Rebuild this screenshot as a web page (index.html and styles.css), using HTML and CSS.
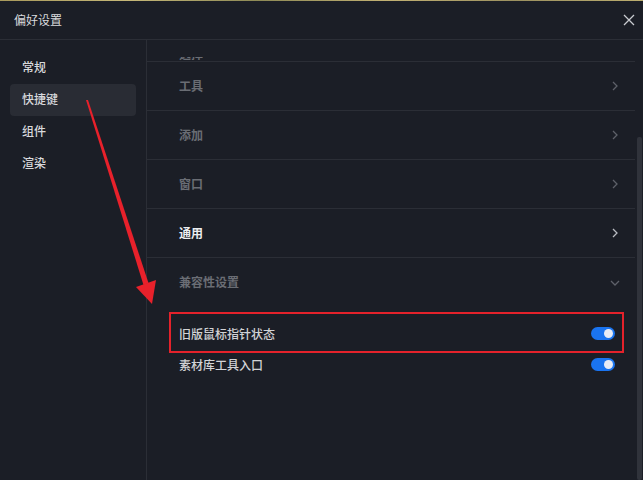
FILE: index.html
```html
<!DOCTYPE html>
<html lang="zh-CN">
<head>
<meta charset="utf-8">
<title>偏好设置</title>
<link rel="stylesheet" href="styles.css">
</head>
<body>
<div class="strip"></div>
<div class="dialog">
  <header class="header">
    <span class="title">偏好设置</span>
    <svg class="close" width="12" height="12" viewBox="0 0 12 12"><path d="M1 1L11 11M11 1L1 11" stroke="#c9cbd0" stroke-width="1.3" fill="none"/></svg>
  </header>
  <div class="main">
    <nav class="sidebar">
      <div class="nav-item">常规</div>
      <div class="nav-item active">快捷键</div>
      <div class="nav-item">组件</div>
      <div class="nav-item">渲染</div>
    </nav>
    <section class="panel">
      <div class="content">
        <div class="row partial"><span class="clip-box"><span class="clip-text">选择</span></span></div>
        <div class="row"><span class="label">工具</span><svg class="chev" width="6" height="10" viewBox="0 0 6 10"><path d="M1 1L5 5L1 9" stroke="#5e6169" stroke-width="1.3" fill="none"/></svg></div>
        <div class="row"><span class="label">添加</span><svg class="chev" width="6" height="10" viewBox="0 0 6 10"><path d="M1 1L5 5L1 9" stroke="#5e6169" stroke-width="1.3" fill="none"/></svg></div>
        <div class="row"><span class="label">窗口</span><svg class="chev" width="6" height="10" viewBox="0 0 6 10"><path d="M1 1L5 5L1 9" stroke="#5e6169" stroke-width="1.3" fill="none"/></svg></div>
        <div class="row"><span class="label bright">通用</span><svg class="chev" width="6" height="10" viewBox="0 0 6 10"><path d="M1 1L5 5L1 9" stroke="#b9bcc2" stroke-width="1.3" fill="none"/></svg></div>
        <div class="row last"><span class="label">兼容性设置</span><svg class="chev down" width="10" height="6" viewBox="0 0 10 6"><path d="M1 1L5 5L9 1" stroke="#5e6169" stroke-width="1.3" fill="none"/></svg></div>
        <div class="sub-list">
          <div class="sub-item marked"><span>旧版鼠标指针状态</span><span class="toggle"><span class="knob"></span></span></div>
          <div class="sub-item second"><span>素材库工具入口</span><span class="toggle"><span class="knob"></span></span></div>
        </div>
      </div>
      <div class="scrolltrack"><div class="thumb"></div></div>
    </section>
  </div>
</div>
<svg class="arrow" width="643" height="480" viewBox="0 0 643 480">
  <path d="M86 100 L88 100 L148.5 283 L143.5 285 Z" fill="#e8212b"/>
  <path d="M136 287 L156 280 L152 304 Z" fill="#e8212b"/>
</svg>
</body>
</html>
```
FILE: styles.css
```css
* { box-sizing: border-box; }
html, body {
  margin: 0;
  padding: 0;
  width: 643px;
  height: 480px;
  overflow: hidden;
  background: #1b1e26;
  font-family: "Noto Sans CJK SC", "Noto Sans", sans-serif;
  font-size: 12px;
  color: #d6d7da;
}
body { position: relative; }
.strip {
  height: 1px;
  background: linear-gradient(90deg, #a99a5c, #c6b878 20%, #8e8a56 40%, #c2b173 60%, #9c9160 80%, #bcae6f);
}
.dialog {
  display: flex;
  flex-direction: column;
  height: 479px;
}
.header {
  height: 39px;
  border-bottom: 1px solid #2b2e36;
  display: flex;
  align-items: center;
  justify-content: space-between;
  padding: 0 8px 1px 14px;
}
.title { color: #d9dadd; font-size: 12px; }
.close { display: block; }
.main {
  flex: 1;
  display: flex;
  min-height: 0;
}
.sidebar {
  width: 147px;
  flex: none;
  border-right: 1px solid #2b2e36;
  padding-top: 12px;
  display: flex;
  flex-direction: column;
}
.nav-item {
  height: 32px;
  margin: 0 10px;
  padding: 0 0 3px 12px;
  display: flex;
  align-items: center;
  color: #d8d9dc;
  font-weight: 500;
  border-radius: 4px;
}
.nav-item.active { background: #292c34; }
.panel {
  flex: 1;
  display: flex;
  min-width: 0;
}
.content {
  flex: 1;
  min-width: 0;
  display: flex;
  flex-direction: column;
}
.row {
  height: 49px;
  border-bottom: 1px solid #2b2e36;
  display: flex;
  align-items: center;
  justify-content: space-between;
  padding: 0 16px 2px 32px;
  flex: none;
}
.row .chev { margin-top: 2px; }
.row.partial {
  height: 22px;
  align-items: flex-start;
  padding-top: 17px;
}
.clip-box {
  display: block;
  height: 4px;
  overflow: hidden;
}
.clip-text {
  display: block;
  color: #6a6d74;
  font-weight: 700;
  line-height: 14px;
  margin-top: -10px;
}
.label {
  color: #6a6d74;
  font-weight: 700;
}
.label.bright { color: #eceef0; }
.chev { display: block; margin-right: 1px; }
.chev.down { margin-right: -1px; }
.row.last { border-bottom: none; }
.sub-list {
  padding: 9px 20px 0 32px;
  display: flex;
  flex-direction: column;
}
.sub-item {
  height: 34px;
  display: flex;
  align-items: center;
  justify-content: space-between;
  color: #d2d3d6;
  font-weight: 500;
}
.sub-item.marked { position: relative; }
.sub-item.marked::after {
  content: "";
  position: absolute;
  left: -10px;
  right: -9px;
  top: -4px;
  bottom: -3px;
  border: 2px solid #e4222b;
  pointer-events: none;
}
.sub-item.second { height: 28px; }
.toggle {
  width: 24px;
  height: 13px;
  border-radius: 7px;
  background: #1a74f0;
  display: flex;
  align-items: center;
  justify-content: flex-end;
  padding-right: 2px;
}
.knob {
  width: 9px;
  height: 9px;
  border-radius: 50%;
  background: #e8ecf5;
}
.scrolltrack {
  width: 8px;
  flex: none;
  padding: 97px 1px 0 2px;
}
.thumb {
  height: 100%;
  background: #30333b;
  border-radius: 2px;
}
.arrow {
  position: absolute;
  left: 0;
  top: 0;
  pointer-events: none;
}
```
